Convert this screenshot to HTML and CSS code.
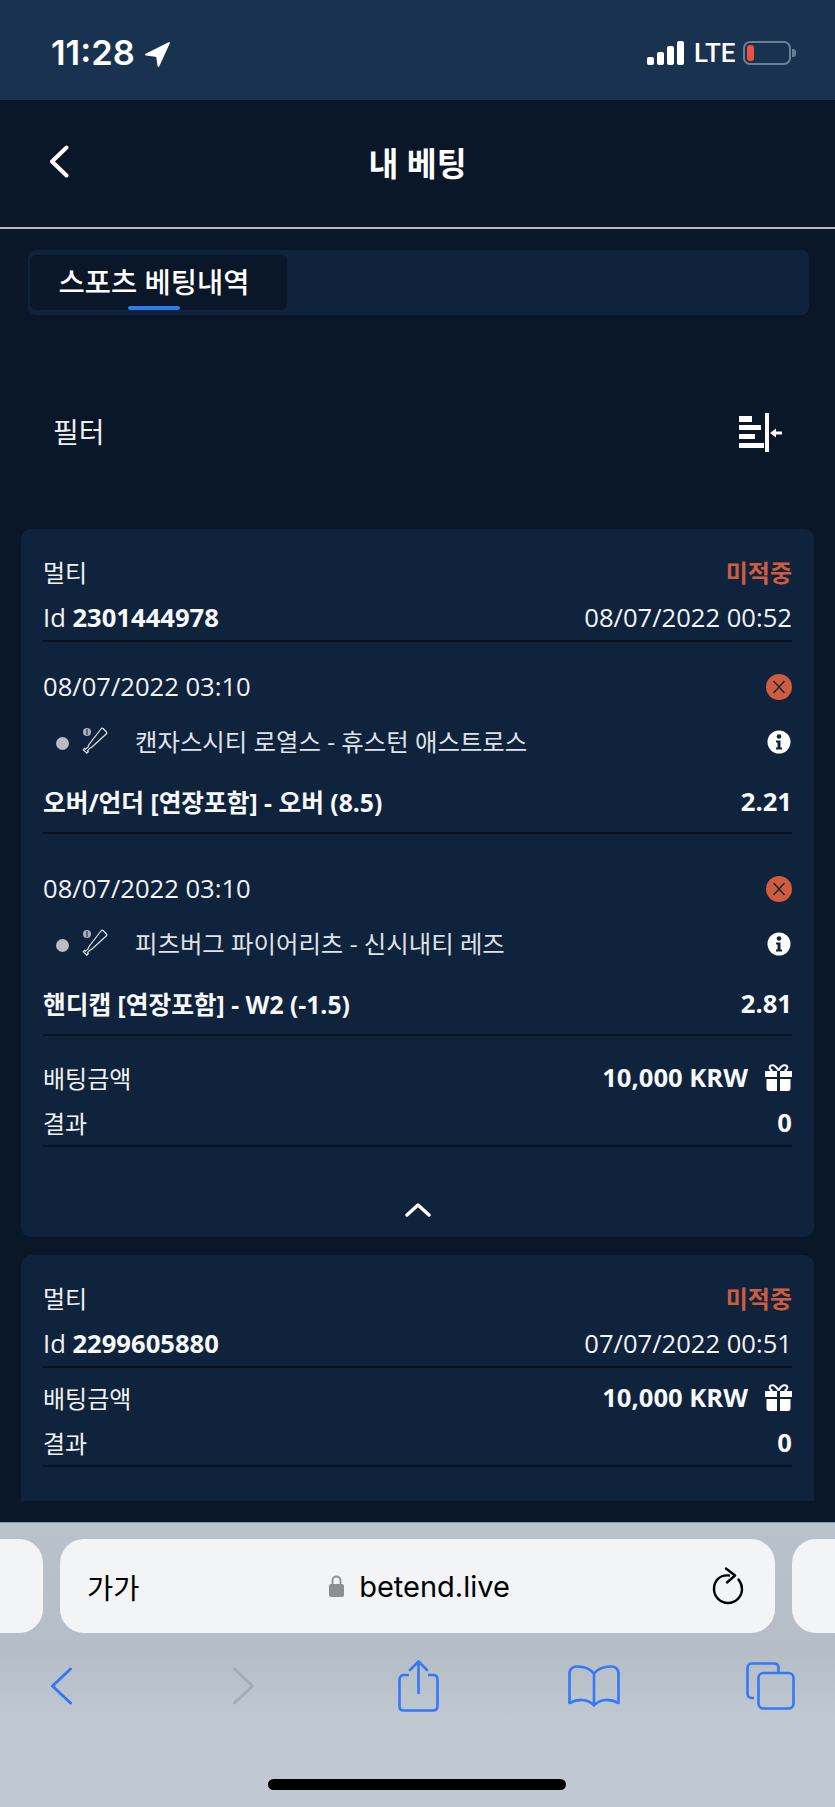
FILE: index.html
```html
<!DOCTYPE html>
<html lang="ko">
<head>
<meta charset="utf-8">
<title>내 베팅</title>
<link rel="stylesheet" href="styles.css">
</head>
<body>
<div class="screen">
  <div class="status">
    <div class="status-left">
      <span class="time">11:28</span>
      <svg class="loc" viewBox="0 0 25 25"><path d="M24 1 1 12.500 12 14l1.500 10z" fill="#fff" stroke="#fff" stroke-width="1.800" stroke-linejoin="round"/></svg>
    </div>
    <div class="status-right">
      <div class="signal"><i class="b1"></i><i class="b2"></i><i class="b3"></i><i class="b4"></i></div>
      <span class="lte">LTE</span>
      <div class="battery"><i class="level"></i></div>
      <i class="nub"></i>
    </div>
  </div>

  <header class="topbar">
    <svg class="back" viewBox="0 0 21 33"><path d="M18.500 2.500 4 16.500l14.500 14" fill="none" stroke="#fff" stroke-width="4" stroke-linecap="round" stroke-linejoin="round"/></svg>
    <h1 class="title">내 베팅</h1>
  </header>

  <main class="content">
    <nav class="tabs">
      <div class="tab">스포츠 베팅내역<i class="tab-mark"></i></div>
    </nav>

    <div class="filter">
      <span>필터</span>
      <svg class="filter-icon" viewBox="0 0 43 39">
        <g fill="#fff">
          <rect x="0" y="3" width="13" height="6"/>
          <rect x="0" y="12" width="22" height="5"/>
          <rect x="0" y="21" width="16" height="5"/>
          <rect x="0" y="30" width="25" height="5"/>
          <rect x="26" y="0" width="4" height="39"/>
          <path d="M31 20 37 15.500v3h6v3h-6v3z"/>
        </g>
      </svg>
    </div>

    <section class="card">
      <div class="row row-head"><span class="kr">멀티</span><b class="lost">미적중</b></div>
      <div class="row row-id line"><span>Id <b>2301444978</b></span><span>08/07/2022 00:52</span></div>

      <div class="bet bet-first">
        <div class="bet-date"><span>08/07/2022 03:10</span>
          <svg class="st-icon" viewBox="0 0 26 26"><circle cx="13" cy="13" r="13" fill="#cf5c3f"/><path d="m7.500 7 11 12m0-12-11 12" stroke="#10233d" stroke-width="1.300" fill="none"/></svg>
        </div>
        <div class="bet-teams">
          <i class="dot"></i>
          <svg class="bat" viewBox="0 0 26 27"><circle cx="5" cy="5" r="4" fill="#aab0b8"/><path d="M5 2v6" stroke="#10233d"/><path d="m21 1.500 3.500 3.500c.6.800.3 1.500-.3 2L10 20l-2.500 1.500-2 2.500.8.800-1.500 1.300-3.500-3.300 1.300-1.500.8.800 2.500-2L7 17.500 19 2c.6-.8 1.300-1 2-.5z" fill="none" stroke="#dfe3e8" stroke-width="1.200"/></svg>
          <span class="team-name">캔자스시티 로열스 - 휴스턴 애스트로스</span>
          <svg class="info" viewBox="0 0 24 24"><circle cx="12" cy="12" r="11.500" fill="#fff"/><circle cx="12" cy="6.500" r="2.300" fill="#10233d"/><path d="M9 10.500h4.500v7H15v2H9v-2h1.500v-5H9z" fill="#10233d"/></svg>
        </div>
        <div class="bet-market line"><b class="market">오버/언더 [연장포함] - 오버 (8.5)</b><b>2.21</b></div>
      </div>

      <div class="bet">
        <div class="bet-date"><span>08/07/2022 03:10</span>
          <svg class="st-icon" viewBox="0 0 26 26"><circle cx="13" cy="13" r="13" fill="#cf5c3f"/><path d="m7.500 7 11 12m0-12-11 12" stroke="#10233d" stroke-width="1.300" fill="none"/></svg>
        </div>
        <div class="bet-teams">
          <i class="dot"></i>
          <svg class="bat" viewBox="0 0 26 27"><circle cx="5" cy="5" r="4" fill="#aab0b8"/><path d="M5 2v6" stroke="#10233d"/><path d="m21 1.500 3.500 3.500c.6.800.3 1.500-.3 2L10 20l-2.500 1.500-2 2.500.8.800-1.500 1.300-3.500-3.300 1.300-1.500.8.800 2.500-2L7 17.500 19 2c.6-.8 1.300-1 2-.5z" fill="none" stroke="#dfe3e8" stroke-width="1.200"/></svg>
          <span class="team-name">피츠버그 파이어리츠 - 신시내티 레즈</span>
          <svg class="info" viewBox="0 0 24 24"><circle cx="12" cy="12" r="11.500" fill="#fff"/><circle cx="12" cy="6.500" r="2.300" fill="#10233d"/><path d="M9 10.500h4.500v7H15v2H9v-2h1.500v-5H9z" fill="#10233d"/></svg>
        </div>
        <div class="bet-market line"><b class="market">핸디캡 [연장포함] - W2 (-1.5)</b><b>2.81</b></div>
      </div>

      <div class="summary summary-open">
        <div class="row"><span class="kr">배팅금액</span>
          <span class="stake"><b>10,000 KRW</b>
            <svg class="gift" viewBox="0 0 27 27"><path fill="#fff" d="M0 7h12v6H0zM15 7h12v6H15zM1.500 15H12v12H4c-1.500 0-2.500-1-2.500-2.500zM15 15h10.500v9.500c0 1.500-1 2.500-2.500 2.500h-8z"/><path d="M13.500 6.500C11 2 8 .8 6 1.500 3.800 2.400 4.500 6 7.500 6.500M13.500 6.500C16 2 19 .8 21 1.500c2.200.9 1.500 4.500-1.500 5" fill="none" stroke="#fff" stroke-width="2"/></svg>
          </span>
        </div>
        <div class="row line"><span class="kr">결과</span><b>0</b></div>
      </div>
      <div class="collapse">
        <svg class="chev-up" viewBox="0 0 26 14"><path d="M2 12 13 2l11 10" fill="none" stroke="#fff" stroke-width="3.400" stroke-linecap="round" stroke-linejoin="round"/></svg>
      </div>
    </section>

    <section class="card card-cut">
      <div class="row row-head"><span class="kr">멀티</span><b class="lost">미적중</b></div>
      <div class="row row-id line"><span>Id <b>2299605880</b></span><span>07/07/2022 00:51</span></div>
      <div class="summary">
        <div class="row"><span class="kr">배팅금액</span>
          <span class="stake"><b>10,000 KRW</b>
            <svg class="gift" viewBox="0 0 27 27"><path fill="#fff" d="M0 7h12v6H0zM15 7h12v6H15zM1.500 15H12v12H4c-1.500 0-2.500-1-2.500-2.500zM15 15h10.500v9.500c0 1.500-1 2.500-2.500 2.500h-8z"/><path d="M13.500 6.500C11 2 8 .8 6 1.500 3.800 2.400 4.500 6 7.500 6.500M13.500 6.500C16 2 19 .8 21 1.500c2.200.9 1.500 4.500-1.500 5" fill="none" stroke="#fff" stroke-width="2"/></svg>
          </span>
        </div>
        <div class="row line"><span class="kr">결과</span><b>0</b></div>
      </div>
    </section>
  </main>

  <footer class="safari">
    <div class="url-row">
      <div class="side-tab side-left"></div>
      <div class="url">
        <span class="aa">가가</span>
        <span class="host">
          <svg class="lock" viewBox="0 0 15 22"><path d="M3.500 10V5.500a4 4 0 0 1 8 0V10" fill="none" stroke="#8e8e93" stroke-width="1.800"/><rect x="0" y="9" width="15" height="13" rx="2" fill="#8e8e93"/></svg>
          betend.live
        </span>
        <svg class="reload" viewBox="0 0 32 39"><path d="M17 8.500C7.500 7.500 2 14 2 22a14 14 0 0 0 28 0c0-4-1.500-7-3.500-9.500" fill="none" stroke="#000" stroke-width="2.400" stroke-linecap="round"/><path d="M14 1.500 23 8.500l-8 7" fill="none" stroke="#000" stroke-width="2.400" stroke-linecap="round" stroke-linejoin="round"/></svg>
      </div>
      <div class="side-tab side-right"></div>
    </div>
    <div class="nav">
      <svg class="nav-chev" viewBox="0 0 23 38"><path d="M20.500 2 2.500 19l18 17" fill="none" stroke="#3478f6" stroke-width="3" stroke-linecap="round" stroke-linejoin="round"/></svg>
      <svg class="nav-chev" viewBox="0 0 23 38"><path d="M2.500 2l18 17-18 17" fill="none" stroke="#a4abb2" stroke-width="3" stroke-linecap="round" stroke-linejoin="round"/></svg>
      <svg class="share" viewBox="0 0 41 52"><path d="M11 15H6c-2.500 0-4.500 1.500-4.500 4.500V46c0 3 2 4.500 4.500 4.500h29c2.500 0 4.500-1.500 4.500-4.500V19.500c0-3-2-4.500-4.500-4.500h-5" fill="none" stroke="#3478f6" stroke-width="2.600"/><path d="M20.500 33V2M12 10l8.500-8.500L29 10" fill="none" stroke="#3478f6" stroke-width="2.600" stroke-linecap="round" stroke-linejoin="round"/></svg>
      <svg class="book" viewBox="0 0 52 42"><path d="M26 9C22 3 15 1.500 9 1.500 5 1.500 2 3.500 1.500 8L1.500 38c8-4 18-5 24.500 2.500C32.500 33 42.500 34 50.500 38V8C50 3.500 47 1.500 43 1.500 37 1.500 30 3 26 9zM26 9v31" fill="none" stroke="#3478f6" stroke-width="2.600" stroke-linejoin="round"/></svg>
      <svg class="pages" viewBox="0 0 49 48"><path d="M8 36H6c-3 0-4.500-2-4.500-4.500V6C1.500 3 3.500 1.500 6 1.500h22c3 0 4.500 2 4.500 4.500v4" fill="none" stroke="#3478f6" stroke-width="2.600"/><rect x="12.500" y="11" width="35" height="35.500" rx="5" fill="none" stroke="#3478f6" stroke-width="2.600"/></svg>
    </div>
    <div class="home-row"><i class="home"></i></div>
  </footer>
</div>
</body>
</html>
```

FILE: styles.css
```css
* { box-sizing: border-box; }
html, body { margin: 0; padding: 0; }
body {
  width: 835px;
  height: 1807px;
  overflow: hidden;
  background: #0a1728;
  color: #f1f3f5;
  font-family: "Open Sans", "Noto Sans CJK KR", sans-serif;
  font-size: 25.6px;
}
.screen { display: flex; flex-direction: column; width: 835px; height: 1807px; }

/* status bar */
.status {
  height: 100px;
  flex: none;
  background: #19324f;
  display: flex;
  justify-content: space-between;
  padding: 38px 39px 0 51px;
  align-items: flex-start;
}
.status-left { display: flex; align-items: center; height: 30px; gap: 10px; }
.time { font-family: Inter, sans-serif; font-size: 34.500px; font-weight: 600; color: #fff; line-height: 30px; }
.loc { width: 25px; height: 25px; margin-top: 2px; }
.status-right { display: flex; align-items: center; height: 30px; }
.signal { display: flex; align-items: flex-end; gap: 3px; height: 24px; margin-right: 10px; }
.signal i { width: 7px; background: #fff; border-radius: 2px; display: block; }
.b1 { height: 8px; } .b2 { height: 13px; } .b3 { height: 19px; } .b4 { height: 24px; }
.lte { font-family: Roboto, sans-serif; font-size: 26px; font-weight: 500; color: #fff; width: 49px; line-height: 30px; }
.battery { width: 48px; height: 24px; border: 2px solid #6c7f92; border-radius: 7px; padding: 2px; }
.level { display: block; width: 7px; height: 16px; background: #ee4f3f; border-radius: 3px; }
.nub { display: block; width: 4px; height: 8px; background: #6c7f92; border-radius: 0 3px 3px 0; margin-left: 1px; }

/* header */
.topbar {
  height: 129px;
  flex: none;
  background: #0a1728;
  border-bottom: 2px solid #b9bcc0;
  display: flex;
  align-items: center;
  justify-content: center;
  position: relative;
}
.back { position: absolute; left: 48px; top: 45px; width: 21px; height: 33px; }
.title { margin: 0; font-size: 32.500px; font-weight: 700; color: #fff; line-height: 40px; }

/* content */
.content { height: 1293px; flex: none; padding: 21px 21px 0; overflow: hidden; }
.tabs { margin: 0 5px 0 7px; height: 65px; background: #10233d; border-radius: 8px; padding: 5px 2px; }
.tab {
  width: 257px; height: 55px; background: #0a1728; border-radius: 6px;
  position: relative; text-align: center; padding-right: 9px;
  font-size: 28.500px; font-weight: 500; color: #fff; line-height: 54px;
}
.tab-mark { position: absolute; left: 98px; bottom: 0; width: 52px; height: 4px; border-radius: 2px; background: #2f7bf0; }
.filter {
  height: 60px; margin-top: 87px; padding: 0 32px 0 32px;
  display: flex; justify-content: space-between; align-items: center;
  font-size: 28px; color: #eef0f3;
}
.filter span { padding-bottom: 2px; }
.filter-icon { width: 43px; height: 39px; }

.card { background: #10233d; border-radius: 10px; padding: 22px 22px 0; margin-top: 67px; }
.card + .card { margin-top: 18px; }
.card-cut { height: 246px; border-radius: 10px 10px 0 0; }
.row { display: flex; justify-content: space-between; align-items: center; height: 45px; }
.row-head { padding-bottom: 4px; }
.row-id { height: 46px; padding-bottom: 2px; }
.line { border-bottom: 2px solid #081423; }
.kr { font-size: 24px; }
b { font-weight: 700; color: #f7f8f9; }
.lost { color: #d05c3f; font-weight: 700; font-size: 24px; }
.market { font-size: 24.700px; }

.bet { padding-top: 32px; }
.bet-first { padding-top: 22px; }
.bet-date { height: 46px; display: flex; justify-content: space-between; align-items: center; }
.bet-date span { padding-bottom: 2px; }
.st-icon { width: 26px; height: 26px; }
.bet-teams { height: 64px; display: flex; align-items: center; }
.dot { width: 13px; height: 13px; border-radius: 50%; background: #b9bcc0; margin: 3px 13px 0 13px; display: block; }
.bat { width: 26px; height: 27px; margin-top: -4px; }
.team-name { margin-left: 27px; flex: 1; font-size: 24.400px; color: #dfe3e8; margin-top: -4px; }
.info { width: 24px; height: 24px; margin-right: 1px; }
.bet-market { height: 60px; padding-bottom: 4px; display: flex; justify-content: space-between; align-items: center; }

.summary { padding-top: 7px; }
.summary-open { padding-top: 19px; }
.summary .row { height: 46px; padding-bottom: 2px; }
.stake { display: flex; align-items: center; gap: 17px; }
.gift { width: 27px; height: 27px; }
.collapse { height: 90px; padding-top: 36px; display: flex; justify-content: center; }
.chev-up { width: 26px; height: 14px; margin-top: 20px; }

/* safari bar */
.safari {
  flex: 1; min-height: 0;
  background: linear-gradient(#b9c2ca, #b5bec6 130px, #c0c9d1 200px);
  border-top: 1px solid #8c98a5;
}
.url-row { display: flex; margin-top: 16px; height: 94px; }
.side-tab { background: #f2f4f6; }
.side-left { width: 43px; border-radius: 0 24px 24px 0; }
.side-right { width: 43px; margin-left: 17px; border-radius: 24px 0 0 24px; }
.url {
  width: 715px; margin-left: 17px; background: #f2f4f6; border-radius: 24px;
  display: flex; align-items: center; justify-content: space-between;
  padding: 0 31px 0 27px; color: #000;
}
.aa { font-size: 28.500px; width: 60px; }
.host { display: flex; align-items: center; gap: 15px; font-size: 29px; font-family: Inter, "Open Sans", sans-serif; margin-left: -20px; }
.lock { width: 15px; height: 22px; }
.reload { width: 32px; height: 39px; }
.nav {
  display: grid;
  grid-template-columns: 122px 242px 108px 244px 108px;
  justify-items: center; align-items: center;
  height: 56px; margin-top: 25px;
}
.nav-chev { width: 23px; height: 38px; }
.share { width: 41px; height: 52px; }
.book { width: 52px; height: 42px; }
.pages { width: 49px; height: 48px; }
.home-row { display: flex; justify-content: center; margin-top: 65px; padding-right: 1px; }
.home { display: block; width: 298px; height: 11px; border-radius: 6px; background: #000; }
```
